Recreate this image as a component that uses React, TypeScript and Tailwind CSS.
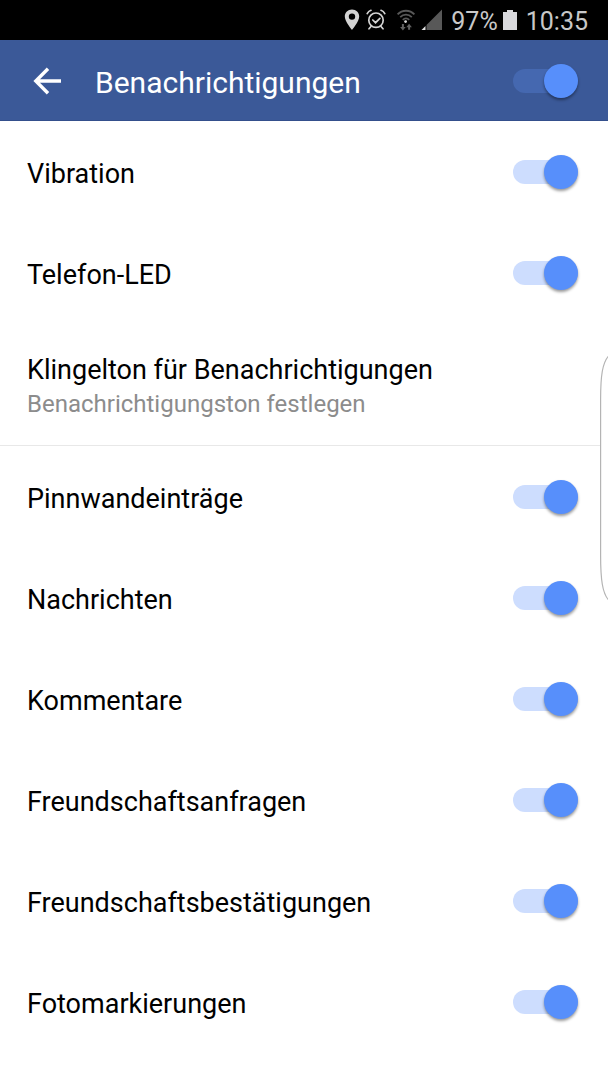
import { useState } from "react";

type SwitchProps = {
  id: string;
  label?: string;
  onHeader?: boolean;
};

function Switch({ id, label, onHeader = false }: SwitchProps) {
  const [on, setOn] = useState(true);
  const track = onHeader
    ? "before:bg-[#4568b0]"
    : "before:bg-[#cdddfe]";
  return (
    <input
      id={id}
      type="checkbox"
      role="switch"
      aria-label={label}
      checked={on}
      onChange={(e) => setOn(e.target.checked)}
      className={`relative block h-[34px] w-[65px] shrink-0 cursor-pointer appearance-none before:absolute before:inset-x-0 before:top-[5px] before:h-6 before:rounded-full before:content-[''] after:absolute after:top-0 after:left-0 after:size-[34px] after:rounded-full after:bg-[#9aa4b8] after:shadow-[0_2px_3px_rgba(0,0,0,0.4)] after:content-[''] checked:after:left-[31px] checked:after:bg-[#578ffb] ${track}`}
    />
  );
}

function SettingRow({ id, title }: { id: string; title: string }) {
  return (
    <li className="flex min-h-[101px] items-center justify-between pr-[30px] pl-[27px]">
      <label htmlFor={id} className="pt-1 text-[27px] leading-8">
        {title}
      </label>
      <Switch id={id} />
    </li>
  );
}

function PinIcon() {
  return (
    <svg viewBox="0 0 16 22" className="h-[22px] w-4" aria-hidden="true">
      <path
        fill="#d3d3d3"
        fillRule="evenodd"
        d="M8 0.5C3.9 0.5 0.8 3.5 0.8 7.5C0.8 12.4 8 21 8 21S15.2 12.4 15.2 7.5C15.2 3.5 12.1 0.5 8 0.5ZM8 4.4A3.2 3.2 0 1 1 8 10.8A3.2 3.2 0 1 1 8 4.4Z"
      />
    </svg>
  );
}

function AlarmIcon() {
  return (
    <svg
      viewBox="0 0 20 22"
      className="h-[22px] w-5"
      fill="none"
      stroke="#d3d3d3"
      strokeWidth="1.7"
      strokeLinecap="round"
      aria-hidden="true"
    >
      <circle cx="10" cy="11.2" r="7.2" />
      <path d="M6.8 11l2.7 2.7 4.4-4.4" />
      <path d="M1.2 4.6C2 3 3.2 1.9 5 1.3M18.8 4.6C18 3 16.8 1.9 15 1.3" />
      <path d="M5 17.5l-2 2.3M15 17.5l2 2.3" />
    </svg>
  );
}

function WifiIcon() {
  return (
    <svg
      viewBox="0 0 20 22"
      className="h-[22px] w-5"
      fill="none"
      stroke="#585858"
      strokeWidth="1.8"
      aria-hidden="true"
    >
      <path d="M1.6 5.4C6.2 0.5 13.8 0.5 18.4 5.4M4.2 8.2C7.5 4.8 12.5 4.8 15.8 8.2M6.8 10.8C8.7 8.9 11.3 8.9 13.2 10.8" />
      <circle cx="9.6" cy="12.6" r="1.4" fill="#d8d8d8" stroke="none" />
      <path
        d="M5.9 15h2v3h1.8L6.9 21.4 4.1 18h1.8zM12.1 20.8h2v-2.6h1.8L13.1 14.8 10.3 18.2h1.8z"
        fill="#626262"
        stroke="none"
      />
    </svg>
  );
}

function SignalIcon() {
  return (
    <svg viewBox="0 0 22 22" className="h-[22px] w-[22px]" aria-hidden="true">
      <path d="M21 0.5V21H5.5V16z" fill="#585858" />
      <path d="M4.5 17V21H0.5z" fill="#e4e4e4" />
    </svg>
  );
}

function BatteryIcon() {
  return (
    <svg viewBox="0 0 14 22" className="h-[22px] w-3.5" aria-hidden="true">
      <path d="M4 1h6v2h4v18H0V3h4z" fill="#d8d8dc" />
    </svg>
  );
}

function StatusBar() {
  return (
    <div className="flex h-10 items-center justify-end bg-black pr-5 text-[25px] leading-8 text-[#c8c8c8]">
      <div className="flex items-center">
        <PinIcon />
        <span className="ml-1.5">
          <AlarmIcon />
        </span>
        <span className="ml-2.5">
          <WifiIcon />
        </span>
        <span className="ml-[5px]">
          <SignalIcon />
        </span>
      </div>
      <span className="ml-2 pt-1">97%</span>
      <span className="ml-[5px]">
        <BatteryIcon />
      </span>
      <time className="ml-[9px] pt-1">10:35</time>
    </div>
  );
}

const general = [
  { id: "vibration", title: "Vibration" },
  { id: "led", title: "Telefon-LED" },
];

const events = [
  { id: "wall", title: "Pinnwandeinträge" },
  { id: "messages", title: "Nachrichten" },
  { id: "comments", title: "Kommentare" },
  { id: "requests", title: "Freundschaftsanfragen" },
  { id: "confirmations", title: "Freundschaftsbestätigungen" },
  { id: "tags", title: "Fotomarkierungen" },
];

export default function App() {
  return (
    <div className="relative min-h-screen overflow-hidden bg-white font-['Roboto',sans-serif] text-black">
      <StatusBar />
      <header className="flex h-[81px] items-center bg-[#3b5998] pr-[30px] pl-8 text-white shadow-[inset_0_-1px_0_#344f8c]">
        <button type="button" aria-label="Zurück" className="cursor-pointer">
          <svg
            viewBox="0 0 30 30"
            className="size-[30px]"
            fill="none"
            stroke="#fff"
            strokeWidth="3.4"
            aria-hidden="true"
          >
            <path d="M29 15H4M16 2.8L3.8 15L16 27.2" />
          </svg>
        </button>
        <h1 className="ml-[33px] flex-1 pt-1 text-[30px] leading-9">
          Benachrichtigungen
        </h1>
        <Switch id="all" label="Benachrichtigungen" onHeader />
      </header>
      <main>
        <ul>
          {general.map((item) => (
            <SettingRow key={item.id} {...item} />
          ))}
        </ul>
        <button
          type="button"
          className="flex min-h-[123px] w-full cursor-pointer flex-col justify-center border-b border-[#e8e8e8] pt-1 pr-[30px] pl-[27px] text-left"
        >
          <span className="text-[27px] leading-9">
            Klingelton für Benachrichtigungen
          </span>
          <span className="text-2xl text-[#8c8c8c]">
            Benachrichtigungston festlegen
          </span>
        </button>
        <ul>
          {events.map((item) => (
            <SettingRow key={item.id} {...item} />
          ))}
        </ul>
      </main>
      <svg
        viewBox="0 0 8 246"
        className="pointer-events-none absolute top-[355px] right-0 h-[246px] w-2"
        fill="none"
        stroke="#b4b4b4"
        strokeWidth="1.2"
        aria-hidden="true"
      >
        <path
          d="M8.5 1C2.5 8 0.6 20 0.6 45V200C0.6 225 2.5 238 8.5 245"
          fill="#fff"
        />
      </svg>
    </div>
  );
}
